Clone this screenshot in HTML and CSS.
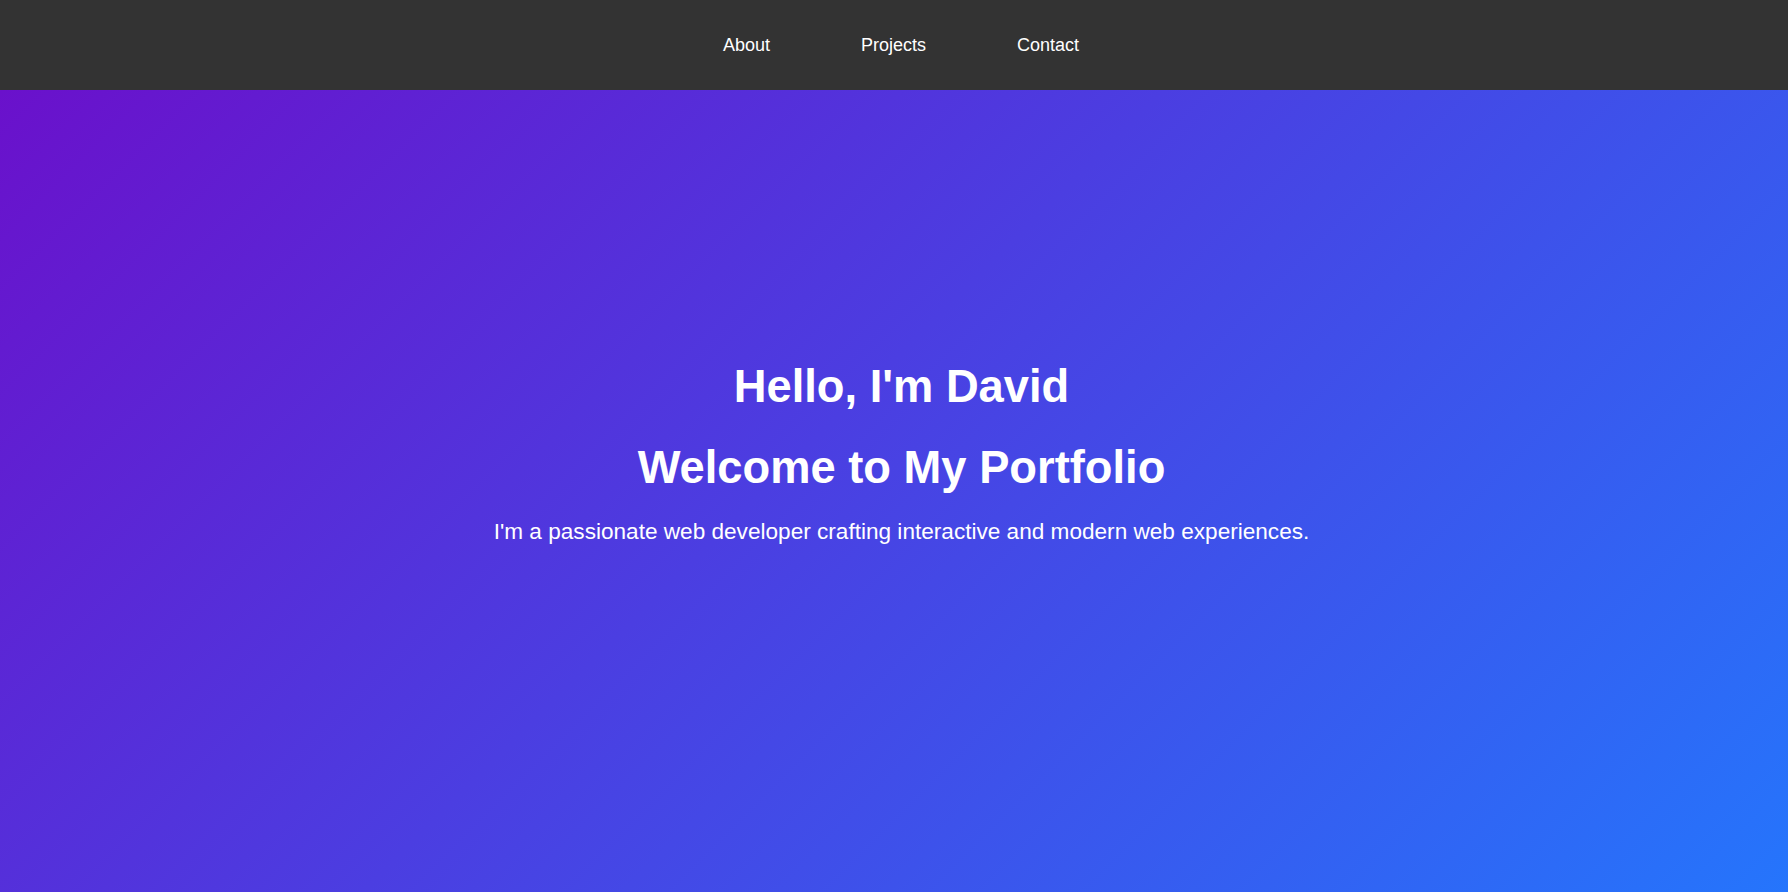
FILE: index.html
```html
<!DOCTYPE html>
<html lang="en">
<head>
<meta charset="utf-8">
<title>David - Portfolio</title>
<link rel="stylesheet" href="styles.css">
</head>
<body>
<header class="nav">
  <ul class="nav-list">
    <li><a href="#about">About</a></li>
    <li><a href="#projects">Projects</a></li>
    <li><a href="#contact">Contact</a></li>
  </ul>
</header>
<section class="hero">
  <h1 class="hero-title">Hello, I'm David</h1>
  <h1 class="hero-title">Welcome to My Portfolio</h1>
  <p class="hero-text">I'm a passionate web developer crafting interactive and modern web experiences.</p>
</section>
</body>
</html>
```

FILE: styles.css
```css
* { box-sizing: border-box; }
html, body { margin: 0; padding: 0; height: 100%; }
body {
  font-family: "Liberation Sans", Arial, sans-serif;
  color: #fff;
  display: flex;
  flex-direction: column;
}
.nav {
  background: #333333;
  height: 90px;
  display: flex;
  align-items: center;
  justify-content: center;
  flex-shrink: 0;
}
.nav-list {
  list-style: none;
  margin: 0;
  padding: 0 0 0 14px;
  display: flex;
  gap: 91px;
}
.nav-list a {
  color: #fff;
  text-decoration: none;
  font-size: 18px;
}
.hero {
  flex: 1;
  background: linear-gradient(135deg, #6a11cb 0%, #2575fc 100%);
  display: flex;
  flex-direction: column;
  align-items: center;
  justify-content: center;
  text-align: center;
  padding: 0 0 92px 15px;
}
.hero-title {
  font-size: 45.3px;
  font-weight: bold;
  margin: 0;
  line-height: 81px;
}
.hero-text {
  font-size: 22.6px;
  line-height: 26px;
  margin: 11px 0 0;
}
```
